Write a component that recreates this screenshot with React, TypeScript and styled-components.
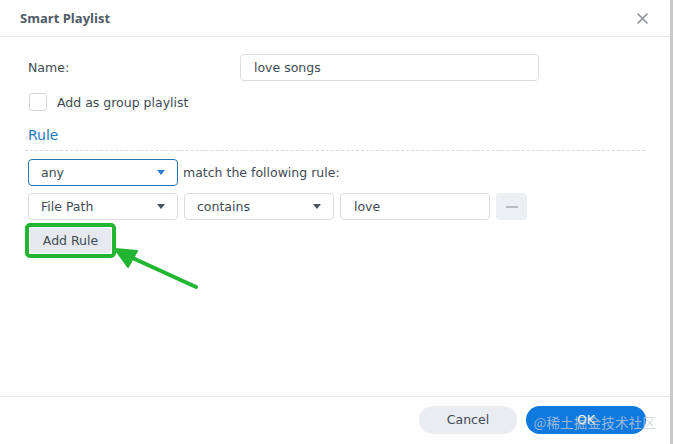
import React from 'react';
import styled, { createGlobalStyle } from 'styled-components';

const GlobalStyle = createGlobalStyle`
  html, body { margin: 0; padding: 0; background: #fff; }
  body { font-family: "DejaVu Sans", Verdana, sans-serif; }
  * { box-sizing: border-box; }
`;

const Screen = styled.div`
  width: 673px;
  height: 444px;
  display: flex;
  flex-direction: row;
  overflow: hidden;
`;

const Dialog = styled.div`
  flex: 1;
  display: flex;
  flex-direction: column;
  background: #fff;
  position: relative;
`;

const EdgeShade = styled.div`
  width: 3px;
  background: #c8c8c8;
`;

const Header = styled.div`
  height: 37px;
  display: flex;
  align-items: center;
  justify-content: space-between;
  padding: 0 22px 0 20px;
  border-bottom: 1px solid #e4e6e9;
`;

const Title = styled.div`
  font-family: "Open Sans", "Noto Sans", sans-serif;
  font-weight: 700;
  font-size: 13px;
  color: #505b66;
`;

const Close = styled.svg`
  width: 11px;
  height: 11px;
`;

const Body = styled.div`
  flex: 1;
  padding: 17px 24px 0 28px;
  display: flex;
  flex-direction: column;
`;

const FieldRow = styled.div`
  display: grid;
  grid-template-columns: 212px 299px;
  align-items: center;
  height: 27px;
`;

const Label = styled.span`
  font-size: 12.5px;
  color: #414b55;
`;

const TextInput = styled.div<{ $width: number }>`
  width: ${p => p.$width}px;
  height: 27px;
  border: 1px solid #d9dde2;
  border-radius: 4px;
  padding: 0 0 0 13px;
  display: flex;
  align-items: center;
  font-size: 12.5px;
  color: #414b55;
  background: #fff;
`;

const CheckRow = styled.label`
  display: flex;
  align-items: center;
  gap: 10px;
  margin-top: 12px;
  height: 18px;
  padding-left: 1px;
`;

const CheckBox = styled.span`
  width: 18px;
  height: 18px;
  border: 1px solid #d3d7dc;
  border-radius: 3px;
  background: #fff;
`;

const SectionTitle = styled.div`
  margin-top: 16px;
  font-size: 14px;
  color: #1d7ac0;
  padding-bottom: 7px;
  border-bottom: 1px dashed #d4d7db;
  margin-left: -3px;
  padding-left: 3px;
  margin-right: 1px;
`;

const RuleRow = styled.div<{ $top: number }>`
  display: flex;
  align-items: center;
  gap: 6px;
  margin-top: ${p => p.$top}px;
`;

const Select = styled.div<{ $active?: boolean }>`
  width: 150px;
  height: 27px;
  border: 1px solid ${p => (p.$active ? '#2b73b0' : '#d9dde2')};
  border-radius: 4px;
  padding: 0 10px 0 12px;
  display: flex;
  align-items: center;
  justify-content: space-between;
  font-size: 12.5px;
  color: #414b55;
  background: #fff;
`;

const Caret = styled.span<{ $active?: boolean }>`
  width: 0;
  height: 0;
  border-left: 4.5px solid transparent;
  border-right: 4.5px solid transparent;
  border-top: 5px solid ${p => (p.$active ? '#2b7fd0' : '#4a545e')};
  margin-right: 2px;
`;

const RuleText = styled.span`
  font-size: 12.5px;
  color: #414b55;
  margin-left: -1px;
`;

const MinusButton = styled.div`
  width: 31px;
  height: 27px;
  border-radius: 4px;
  background: #eceff3;
  display: flex;
  align-items: center;
  justify-content: center;
  &::before {
    content: '';
    width: 12px;
    height: 2px;
    background: #b6bcc3;
  }
`;

const Highlight = styled.div`
  margin-top: 3px;
  margin-left: -3px;
  width: 91px;
  height: 35px;
  border: 4px solid #22b531;
  border-radius: 5px;
  padding: 1px;
`;

const GreyButton = styled.div`
  width: 100%;
  height: 100%;
  border-radius: 2px;
  background: #e6eaf0;
  display: flex;
  align-items: center;
  justify-content: center;
  font-size: 12.5px;
  color: #414b55;
`;

const Pointer = styled.svg`
  position: absolute;
  left: 108px;
  top: 243px;
  width: 95px;
  height: 50px;
`;

const Footer = styled.div`
  height: 48px;
  border-top: 1px solid #e4e6e9;
  display: flex;
  align-items: center;
  justify-content: flex-end;
  gap: 9px;
  padding: 0 24px 2px 0;
`;

const PillButton = styled.div<{ $primary?: boolean }>`
  width: ${p => (p.$primary ? 120 : 98)}px;
  height: 28px;
  border-radius: 14px;
  background: ${p => (p.$primary ? '#0f79e0' : '#e9edf2')};
  color: ${p => (p.$primary ? '#fff' : '#414b55')};
  display: flex;
  align-items: center;
  justify-content: center;
  font-size: 12.5px;
`;

const Watermark = styled.div`
  position: absolute;
  right: 14px;
  bottom: 12px;
  font-family: "Noto Sans CJK SC", sans-serif;
  font-size: 13.5px;
  color: rgba(200, 205, 212, 0.75);
  letter-spacing: 0.2px;
  pointer-events: none;
`;

export default function App() {
  return (
    <>
      <GlobalStyle />
      <Screen>
        <Dialog>
          <Header>
            <Title>Smart Playlist</Title>
            <Close viewBox="0 0 11 11">
              <path d="M1 1 L10 10 M10 1 L1 10" stroke="#8a9097" strokeWidth="1.6" strokeLinecap="round" />
            </Close>
          </Header>
          <Body>
            <FieldRow>
              <Label>Name:</Label>
              <TextInput $width={299}>love songs</TextInput>
            </FieldRow>
            <CheckRow>
              <CheckBox />
              <Label>Add as group playlist</Label>
            </CheckRow>
            <SectionTitle>Rule</SectionTitle>
            <RuleRow $top={8}>
              <Select $active>
                any
                <Caret $active />
              </Select>
              <RuleText>match the following rule:</RuleText>
            </RuleRow>
            <RuleRow $top={7}>
              <Select>
                File Path
                <Caret />
              </Select>
              <Select>
                contains
                <Caret />
              </Select>
              <TextInput $width={150}>love</TextInput>
              <MinusButton />
            </RuleRow>
            <Highlight>
              <GreyButton>Add Rule</GreyButton>
            </Highlight>
          </Body>
          <Pointer viewBox="0 0 95 50">
            <path d="M88 44 L18 12" stroke="#22b531" strokeWidth="4" strokeLinecap="round" />
            <path d="M7 6 L29 8 L20 24 Z" fill="#22b531" stroke="#22b531" strokeWidth="2" strokeLinejoin="round" />
          </Pointer>
          <Footer>
            <PillButton>Cancel</PillButton>
            <PillButton $primary>OK</PillButton>
          </Footer>
          <Watermark>@稀土掘金技术社区</Watermark>
        </Dialog>
        <EdgeShade />
      </Screen>
    </>
  );
}
